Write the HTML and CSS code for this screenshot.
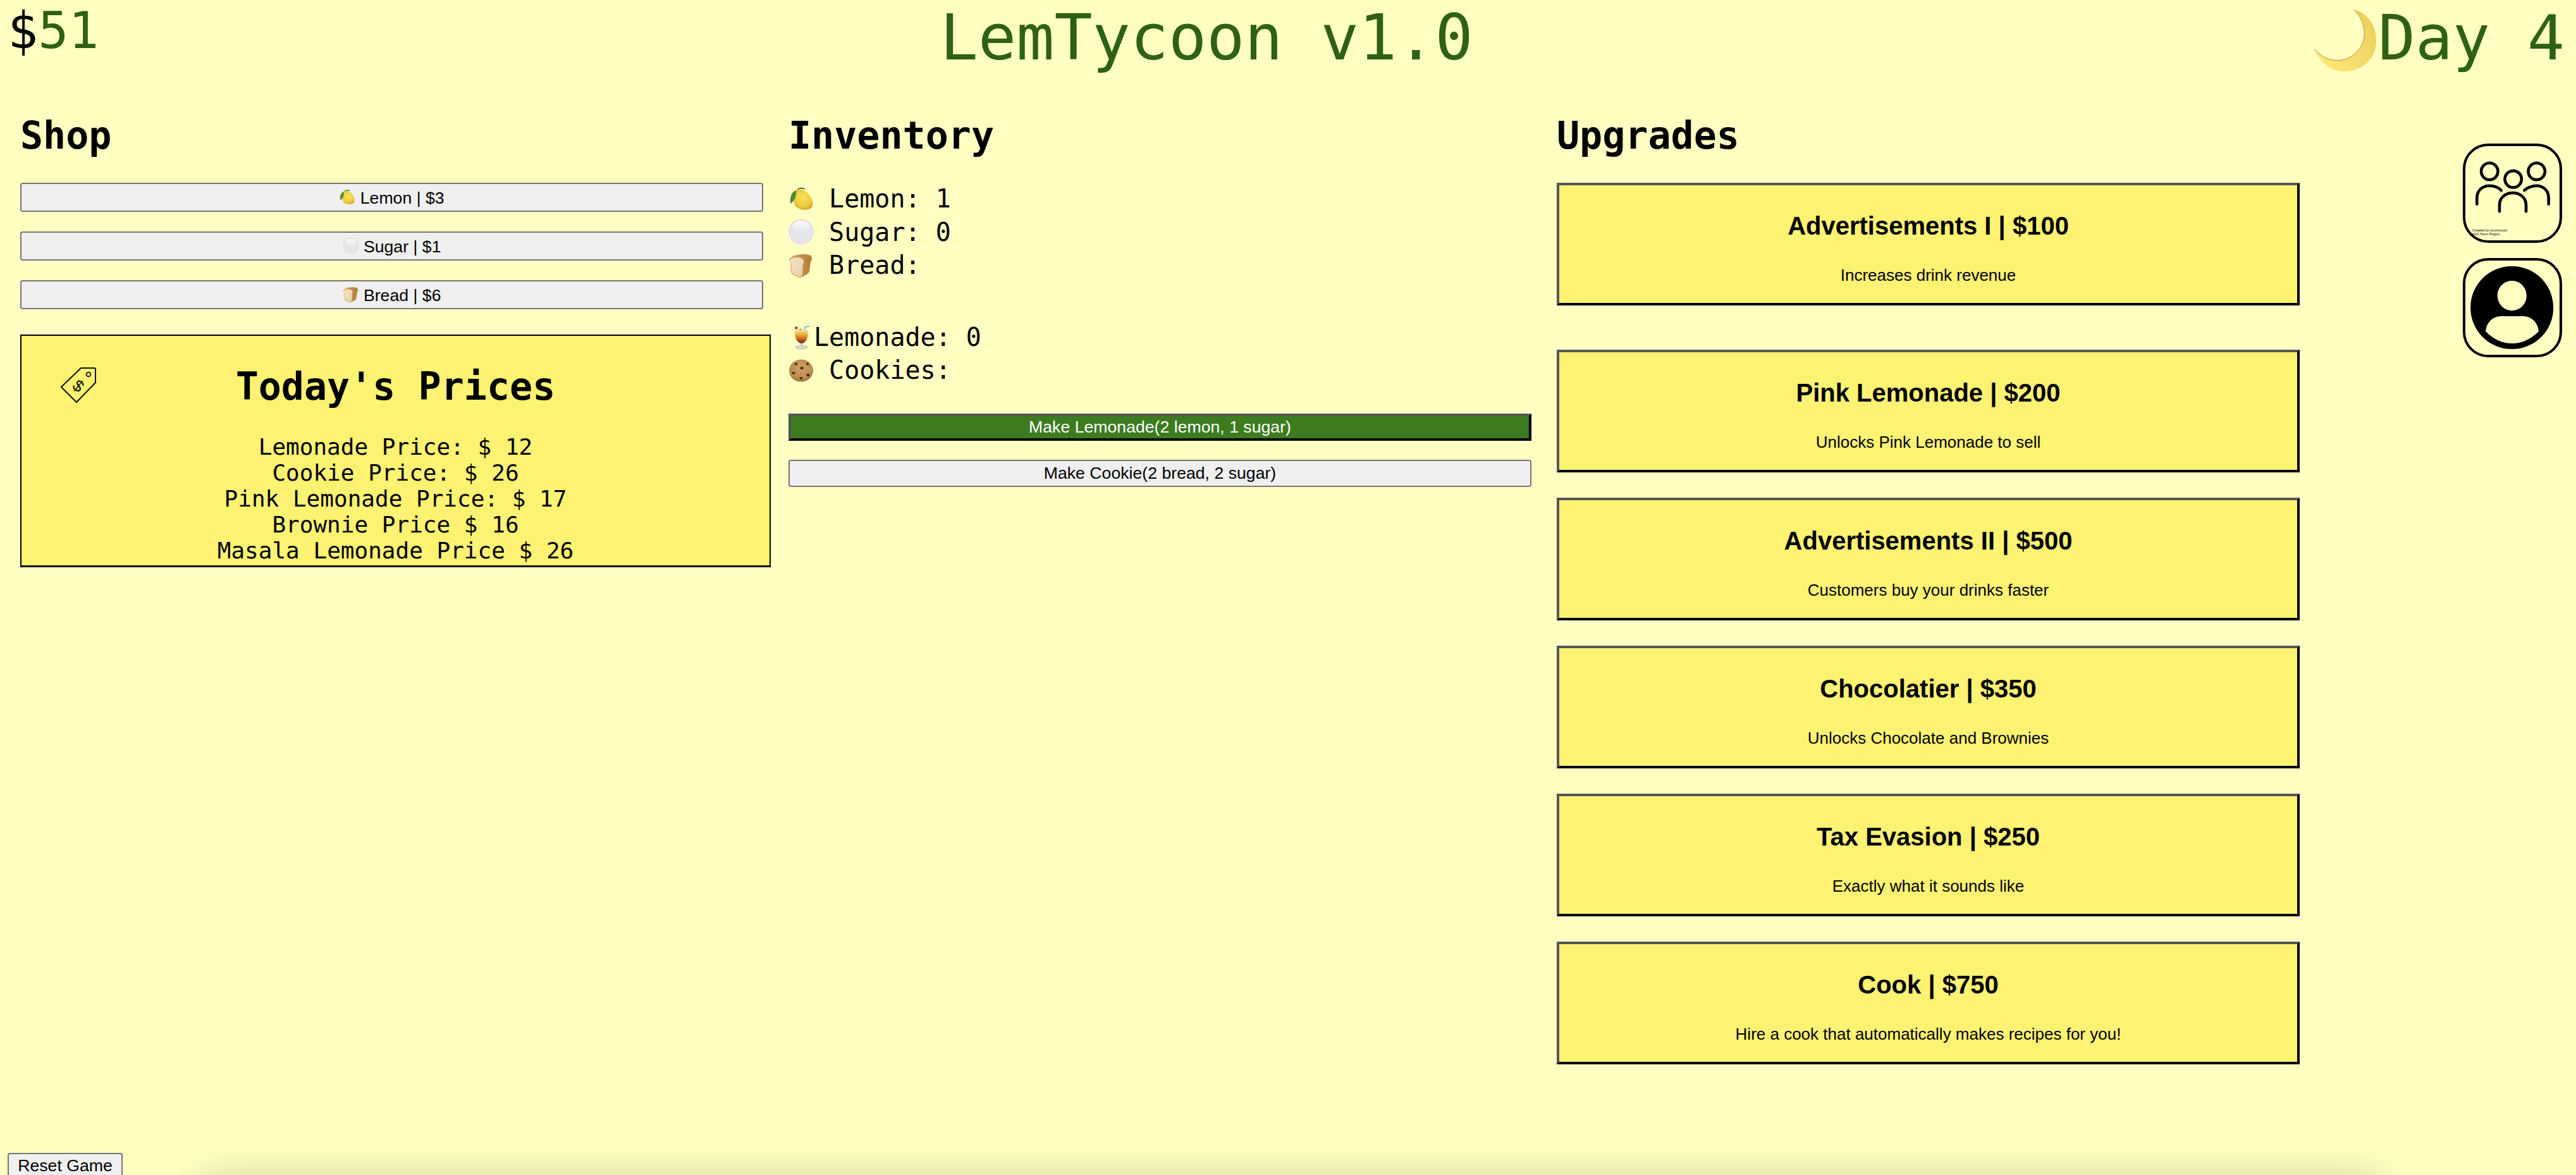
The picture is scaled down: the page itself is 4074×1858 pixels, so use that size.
FILE: index.html
```html
<!DOCTYPE html>
<html lang="en">
<head>
<meta charset="utf-8">
<title>LemTycoon v1.0</title>
<link rel="stylesheet" href="styles.css">
</head>
<body>
<svg class="defs" width="0" height="0" aria-hidden="true">
  <defs>
    <radialGradient id="gLemon" cx="0.5" cy="0.42" r="0.62"><stop offset="0" stop-color="#f6e260"/><stop offset="0.7" stop-color="#eecb3c"/><stop offset="1" stop-color="#c9a02c"/></radialGradient>
    <radialGradient id="gSugar" cx="0.5" cy="0.55" r="0.55"><stop offset="0" stop-color="#e6e6e8"/><stop offset="0.85" stop-color="#e4e4e7"/><stop offset="1" stop-color="#d4d4d8"/></radialGradient>
    <linearGradient id="gSugarTop" x1="0" y1="0" x2="0" y2="1"><stop offset="0" stop-color="#fff" stop-opacity="0.9"/><stop offset="1" stop-color="#fff" stop-opacity="0"/></linearGradient>
    <linearGradient id="gCrust" x1="0" y1="0" x2="1" y2="0"><stop offset="0" stop-color="#d9a45f"/><stop offset="1" stop-color="#b67a3c"/></linearGradient>
    <linearGradient id="gCrumb" x1="0" y1="0" x2="1" y2="1"><stop offset="0" stop-color="#f2e4c4"/><stop offset="1" stop-color="#e4cfa4"/></linearGradient>
    <linearGradient id="gMoon" x1="0" y1="0.9" x2="1" y2="0.2"><stop offset="0" stop-color="#fdea74"/><stop offset="0.6" stop-color="#f4da6c"/><stop offset="1" stop-color="#edcd58"/></linearGradient>
    <linearGradient id="gDrink" x1="0" y1="0" x2="0" y2="1"><stop offset="0" stop-color="#efe2b4"/><stop offset="0.3" stop-color="#eeb433"/><stop offset="0.62" stop-color="#d2701f"/><stop offset="1" stop-color="#5e1e10"/></linearGradient>
    <radialGradient id="gCookie" cx="0.5" cy="0.4" r="0.62"><stop offset="0" stop-color="#d0a164"/><stop offset="0.75" stop-color="#bb8a4f"/><stop offset="1" stop-color="#94642f"/></radialGradient>
    <symbol id="e-lemon" viewBox="0 0 40 40">
      <path d="M12 5 C22 2 32 9 36 18 C39 24 39 30 36 34 C30 38 18 38 12 32 C7 26 7 12 12 5Z" fill="url(#gLemon)"/>
      <path d="M12 6 C6 8 2 14 3 27 C9 24 13 15 12 6Z" fill="#4e8a2f"/>
      <path d="M13 5 C16 1 24 0 28 5 C22 3 17 4 13 5Z" fill="#3f7a25"/>
    </symbol>
    <symbol id="e-sugar" viewBox="0 0 40 40">
      <circle cx="20" cy="20" r="20" fill="url(#gSugar)"/>
      <ellipse cx="20" cy="11" rx="14" ry="9" fill="url(#gSugarTop)"/>
    </symbol>
    <symbol id="e-bread" viewBox="0 0 40 40">
      <path d="M3 8 C8 2 28 0 35 4 C38 7 37 12 35 14 L33 30 C30 34 22 38 18 39 C12 37 5 34 4 30 L3 14 C0 12 1 9 3 8Z" fill="url(#gCrust)"/>
      <path d="M3 10 C7 6 20 6 23 10 C25 13 24 15 23 17 L22 34 C21 36 19 38 18 38 C13 36 6 33 5 30 L4 15 C2 13 2 11 3 10Z" fill="url(#gCrumb)"/>
    </symbol>
    <symbol id="e-drink" viewBox="0 0 40 40">
      <path d="M24.7 14 L26.3 4 L33 3" fill="none" stroke="#55a6dc" stroke-width="1.4"/>
      <path d="M14 10 L20 6 L22 11Z" fill="#7fae3a"/>
      <circle cx="12.3" cy="5.6" r="2.3" fill="#c8322a"/>
      <path d="M10.5 9 L30.3 9 C31.2 19 30 27.5 20.5 30.3 C11 27.5 9.6 19 10.5 9Z" fill="url(#gDrink)"/>
      <rect x="19.5" y="30" width="2" height="5" fill="#b8b8b0"/>
      <ellipse cx="20.5" cy="36.2" rx="9.4" ry="2.5" fill="#dcdcd8" stroke="#9a9a94" stroke-width="0.7"/>
    </symbol>
    <symbol id="e-cookie" viewBox="0 0 40 40">
      <ellipse cx="20" cy="20" rx="19" ry="17.6" fill="url(#gCookie)"/>
      <g fill="#46301f">
        <ellipse cx="12" cy="9.5" rx="2.3" ry="2"/><ellipse cx="30" cy="9.5" rx="2.2" ry="1.9"/><ellipse cx="21" cy="16" rx="2.6" ry="2.2"/>
        <ellipse cx="8" cy="24" rx="2.4" ry="2.1"/><ellipse cx="31" cy="27" rx="2.6" ry="2.2"/><ellipse cx="20" cy="32" rx="2.5" ry="2.1"/>
      </g>
    </symbol>
  </defs>
</svg>

<header class="topbar">
  <div class="money"><span class="dollar">$</span><span class="amount">51</span></div>
  <h1 class="title">LemTycoon v1.0</h1>
  <div class="day">
    <svg class="moon" viewBox="0 0 100 100" aria-hidden="true">
      <path d="M64 0 C86 6 100 25 100 50 C100 79 78 100 49 100 C28 100 9 86 0 64 C12 77 26 83 41 82 C63 80 81 61 81 39 C81 22 73 9 64 0Z" fill="url(#gMoon)"/>
      <path d="M64 0 C73 9 81 22 81 39 C81 61 63 80 41 82 C26 83 12 77 0 64" fill="none" stroke="#b98a3e" stroke-width="1"/>
    </svg><span>Day 4</span>
  </div>
</header>

<main class="board">
  <section class="col">
    <h2 class="heading">Shop</h2>
    <div class="shop-list">
      <button class="btn btn-shop"><svg class="emoji-sm"><use href="#e-lemon"/></svg> Lemon | $3</button>
      <button class="btn btn-shop"><svg class="emoji-sm"><use href="#e-sugar"/></svg> Sugar | $1</button>
      <button class="btn btn-shop"><svg class="emoji-sm"><use href="#e-bread"/></svg> Bread | $6</button>
    </div>
    <div class="prices">
      <svg class="tag" viewBox="0 0 56 56" aria-hidden="true">
        <path d="M32 1 L53 1 Q55 1 55 3 L55 24 L25 55 L0.8 31 Z" fill="none" stroke="#111" stroke-width="2" stroke-linejoin="round"/>
        <circle cx="44" cy="11" r="3.4" fill="none" stroke="#111" stroke-width="1.8"/>
        <text class="tag-sign" x="28" y="38" transform="rotate(38 28 29)">$</text>
      </svg>
      <h2 class="prices-title">Today's Prices</h2>
      <p class="price-line">Lemonade Price: $ 12</p>
      <p class="price-line">Cookie Price: $ 26</p>
      <p class="price-line">Pink Lemonade Price: $ 17</p>
      <p class="price-line">Brownie Price $ 16</p>
      <p class="price-line">Masala Lemonade Price $ 26</p>
    </div>
  </section>

  <section class="col">
    <h2 class="heading">Inventory</h2>
    <div class="inv-list">
      <div class="inv-row"><svg class="emoji-md"><use href="#e-lemon"/></svg> Lemon: 1</div>
      <div class="inv-row"><svg class="emoji-md"><use href="#e-sugar"/></svg> Sugar: 0</div>
      <div class="inv-row"><svg class="emoji-md"><use href="#e-bread"/></svg> Bread:</div>
      <div class="inv-row inv-gap"><svg class="emoji-md"><use href="#e-drink"/></svg>Lemonade: 0</div>
      <div class="inv-row"><svg class="emoji-md"><use href="#e-cookie"/></svg> Cookies:</div>
    </div>
    <button class="btn btn-make btn-active">Make Lemonade(2 lemon, 1 sugar)</button>
    <button class="btn btn-make">Make Cookie(2 bread, 2 sugar)</button>
  </section>

  <section class="col">
    <h2 class="heading">Upgrades</h2>
    <div class="up-list">
      <button class="upgrade up-first"><strong>Advertisements I | $100</strong><span>Increases drink revenue</span></button>
      <button class="upgrade"><strong>Pink Lemonade | $200</strong><span>Unlocks Pink Lemonade to sell</span></button>
      <button class="upgrade"><strong>Advertisements II | $500</strong><span>Customers buy your drinks faster</span></button>
      <button class="upgrade"><strong>Chocolatier | $350</strong><span>Unlocks Chocolate and Brownies</span></button>
      <button class="upgrade"><strong>Tax Evasion | $250</strong><span>Exactly what it sounds like</span></button>
      <button class="upgrade"><strong>Cook | $750</strong><span>Hire a cook that automatically makes recipes for you!</span></button>
    </div>
  </section>

  <aside class="side">
    <button class="side-btn">
      <svg viewBox="4 4 149 149" class="side-icon" aria-hidden="true">
        <g fill="none" stroke="#000" stroke-width="4.6" stroke-linecap="round">
          <circle cx="42.3" cy="44" r="13.2"/><circle cx="116.7" cy="44" r="13.2"/><circle cx="79.7" cy="56.3" r="13.2"/>
          <path d="M22.3 95.7 L22.3 86 C22.3 74 31 66.7 42.3 66.7 C50 66.7 56 69 60.7 74"/>
          <path d="M135.7 95.7 L135.7 86 C135.7 74 127 66.7 116.7 66.7 C109 66.7 103 69 97.3 74"/>
          <path d="M58 107.3 L58 97 C58 86 67 78 79 78 C91 78 100 86 100 97 L100 107.3"/>
        </g>
        <text class="credit" x="15" y="139">Created by counloucon</text>
        <text class="credit" x="15" y="145">from Noun Project</text>
      </svg>
    </button>
    <button class="side-btn">
      <svg viewBox="4 4 149 149" class="side-icon" aria-hidden="true">
        <path fill-rule="evenodd" fill="#000" d="M77.7 13 C114 13 143.2 42 143.2 78.5 C143.2 115 114 144 77.7 144 C41.4 144 12.2 115 12.2 78.5 C12.2 42 41.4 13 77.7 13Z M77.8 36 C65 36 54.8 46.5 54.8 59.6 C54.8 72.7 65 83.2 77.8 83.2 C90.6 83.2 100.8 72.7 100.8 59.6 C100.8 46.5 90.6 36 77.8 36Z M36 116 C37 102 48 92 60 92 L96 92 C108 92 119 102 120 116 C108 128 94 135 78 135 C62 135 48 128 36 116Z"/>
      </svg>
    </button>
  </aside>
</main>

<button class="reset">Reset Game</button>
<div class="dock-shadow"></div>
</body>
</html>
```
FILE: styles.css
```css
* { box-sizing: border-box; }
html, body { height: 100%; }
body {
  margin: 0;
  width: 4074px;
  height: 1858px;
  overflow: hidden;
  background: #ffffc2;
  color: #000;
  font-family: "DejaVu Sans Mono", monospace;
  position: relative;
}
.defs { position: absolute; }
.topbar {
  height: 168px;
  display: flex;
  justify-content: space-between;
  align-items: flex-start;
  padding: 0 18px 0 12px;
}
.money { font-size: 80px; line-height: 97px; }
.dollar { color: #000; }
.amount, .title, .day { color: #2e6114; }
.title { margin: 0; font-size: 100px; font-weight: 400; line-height: 120px; }
.day {
  display: flex;
  align-items: flex-start;
  font-size: 98px;
  line-height: 120px;
}
.moon { width: 98px; height: 98px; margin: 15px 3px 0 0; }

.board {
  display: grid;
  grid-template-columns: 1187px 1187px 1175px 1fr;
  column-gap: 28px;
  padding: 0 22px 0 32px;
  align-items: start;
}
.heading {
  margin: 11px 0 0;
  font-size: 60px;
  font-weight: 700;
  line-height: 70px;
}
.btn {
  display: block;
  width: 1175px;
  height: 46px;
  padding: 0;
  font: 26.67px "Liberation Sans", Arial, sans-serif;
  color: #000;
  background: #efefef;
  border: 2px solid #767676;
  border-radius: 4px;
  text-align: center;
}
.btn-shop { padding-top: 2px; }
.emoji-sm { width: 26px; height: 26px; vertical-align: -3px; }
.shop-list { display: flex; flex-direction: column; gap: 31px; margin-top: 40px; }
.prices {
  position: relative;
  margin-top: 40px;
  height: 368px;
  background: #fdf271;
  border: solid #000;
  border-width: 2px 2px 3px 2px;
  text-align: center;
  font-size: 36px;
}
.tag { position: absolute; left: 62px; top: 50px; width: 56px; height: 56px; }
.tag-sign { font: 26px "Liberation Sans", Arial, sans-serif; text-anchor: middle; fill: #111; }
.prices-title { margin: 43px 0 38px; font-size: 60px; line-height: 74px; font-weight: 700; }
.price-line { margin: 0; line-height: 41px; }

.inv-list { margin-top: 39px; font-size: 40px; line-height: 52.67px; }
.inv-gap { margin-top: 60.6px; }
.emoji-md { width: 40px; height: 40px; vertical-align: -6.5px; }
.btn-make { height: 43px; margin-top: 30px; }
.btn-active {
  margin-top: 42px;
  color: #fff;
  background: #3d7b1f;
  border-radius: 0;
  border-style: solid;
  border-width: 4px;
  border-color: #555 #000 #000 #555;
}

.up-list { display: flex; flex-direction: column; gap: 40px; margin-top: 40px; }
.upgrade {
  display: flex;
  flex-direction: column;
  align-items: center;
  width: 1175px;
  height: 194px;
  padding: 0;
  background: #fdf271;
  border-style: solid;
  border-width: 4px;
  border-color: #555 #000 #000 #555;
  color: #000;
  font-family: "Liberation Sans", Arial, sans-serif;
}
.up-first { margin-bottom: 30px; }
.upgrade strong { font-size: 40px; line-height: 46px; margin-top: 41px; }
.upgrade span { font-size: 26px; line-height: 30px; margin-top: 40px; }

.side { justify-self: end; display: flex; flex-direction: column; gap: 24px; margin-top: 59px; }
.side-btn {
  width: 157px;
  height: 157px;
  padding: 0;
  background: transparent;
  border: 4px solid #000;
  border-radius: 40px;
}
.side-icon { display: block; width: 149px; height: 149px; }
.credit { font: 5.4px "Liberation Sans", Arial, sans-serif; fill: #000; }
.reset {
  position: absolute;
  left: 12px;
  top: 1823px;
  width: 182px;
  height: 46px;
  padding: 0 0 6px;
  font: 26.67px "Liberation Sans", Arial, sans-serif;
  background: #efefef;
  border: 2px solid #767676;
  border-radius: 4px;
  color: #000;
}
.dock-shadow {
  position: absolute;
  left: 320px;
  right: 310px;
  top: 1858px;
  height: 60px;
  box-shadow: 0 0 56px rgba(0, 0, 0, 0.17);
}
```
